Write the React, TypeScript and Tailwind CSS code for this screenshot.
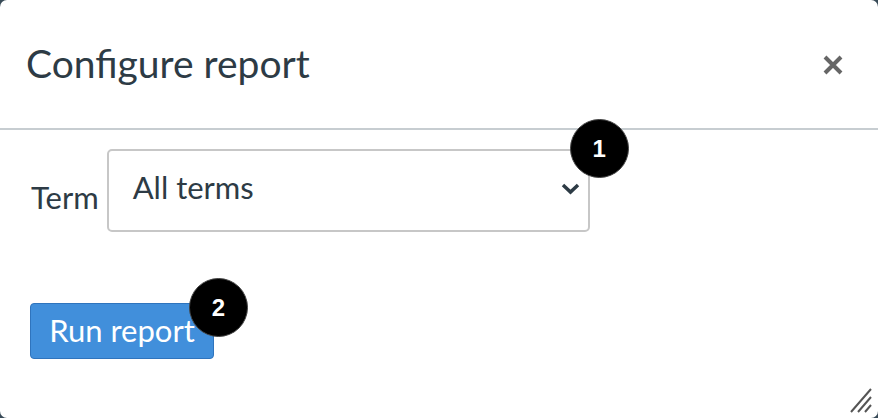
import React from "react";

export default function App() {
  return (
    <div className="w-[878px] h-[418px] bg-[#394b58] overflow-hidden" style={{ fontFamily: "Lato, 'Noto Sans', sans-serif" }}>
      <div className="relative w-full h-full bg-white rounded-[7px] flex flex-col text-[#2d3b45]">
        <div className="h-[130px] border-b-2 border-[#c7cdd1] flex items-center justify-between pl-[26px] pr-[34px] shrink-0">
          <h1 className="text-[39px] leading-none font-normal pb-[2px]">Configure report</h1>
          <svg width="22" height="22" viewBox="0 0 22 22" className="mt-[2px]">
            <path d="M3 3 L19 19 M19 3 L3 19" stroke="#666" strokeWidth="4" strokeLinecap="butt" />
          </svg>
        </div>
        <div className="pt-[19px] pl-[31px]">
          <div className="flex items-center">
            <span className="text-[31px] leading-none pt-[14px] mr-[8px]">Term</span>
            <div className="relative w-[483px] h-[83px] border-2 border-[#c7c7c7] rounded-[5px] flex items-center justify-between pl-[24px] pr-[8px]">
              <span className="text-[31px] leading-none pb-[6px]">All terms</span>
              <svg width="19" height="12" viewBox="0 0 19 12" className="mb-[4px]">
                <path d="M2 2 L9.5 9 L17 2" stroke="#2d3b45" strokeWidth="3.5" fill="none" />
              </svg>
              <div className="absolute left-[461px] top-[-32px] w-[59px] h-[59px] rounded-full bg-black border border-[#444] flex items-center justify-center text-white text-[24px] font-bold" style={{ fontFamily: "'Liberation Sans', Arial, sans-serif" }}>1</div>
            </div>
          </div>
          <div className="mt-[71px] -ml-[1px] relative w-[184px]">
            <button className="w-[184px] h-[56px] bg-[#418fdb] border border-[#2f74bd] rounded-[4px] text-white text-[31px] leading-none flex items-center justify-center pb-[2px]">Run report</button>
            <div className="absolute left-[159px] top-[-25px] w-[59px] h-[59px] rounded-full bg-black border border-[#444] flex items-center justify-center text-white text-[24px] font-bold" style={{ fontFamily: "'Liberation Sans', Arial, sans-serif" }}>2</div>
          </div>
        </div>
        <svg className="absolute right-[5px] bottom-[5px]" width="26" height="28" viewBox="0 0 26 28">
          <path d="M24 4 L4 27 M24 12 L11 27 M24 20 L18 27" stroke="#555" strokeWidth="2" />
        </svg>
      </div>
    </div>
  );
}
